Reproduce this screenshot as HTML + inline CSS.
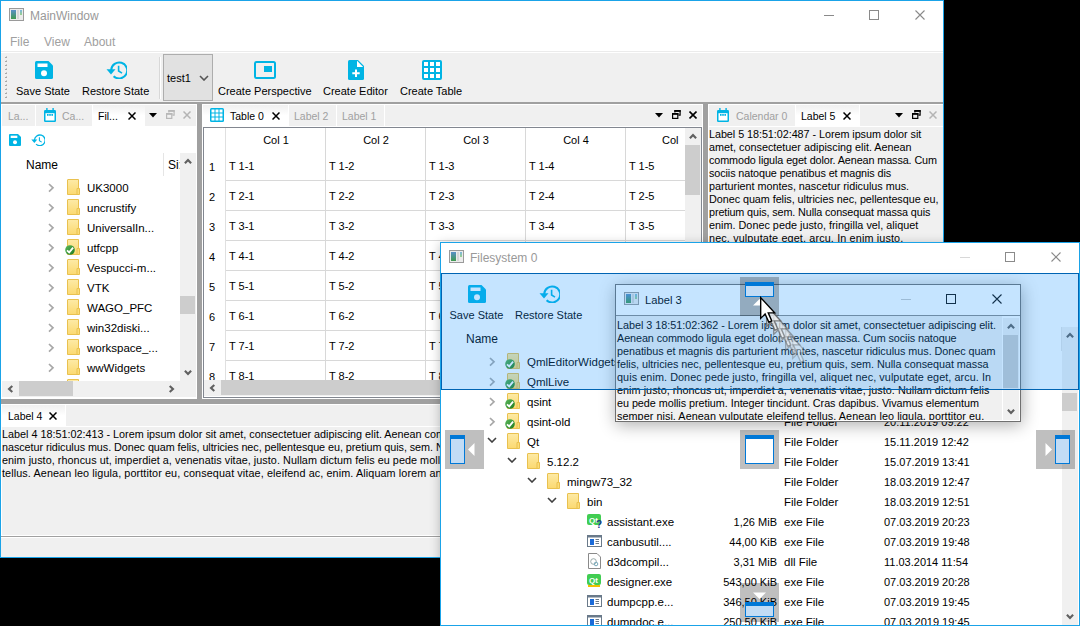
<!DOCTYPE html><html><head><meta charset="utf-8"><style>
html,body{margin:0;padding:0;}
body{width:1080px;height:626px;background:#000;position:relative;overflow:hidden;font-family:"Liberation Sans", sans-serif;}
.t{position:absolute;white-space:nowrap;line-height:1;font-family:"Liberation Sans", sans-serif;}
.r{position:absolute;display:block;}
.clip{position:absolute;overflow:hidden;}
</style></head><body>
<div class="r" style="left:0px;top:0px;width:944px;height:558px;background:#1aa3e8;"></div>
<div class="r" style="left:1px;top:1px;width:942px;height:556px;background:#f0f0f0;"></div>
<div class="r" style="left:1px;top:1px;width:942px;height:51px;background:#ffffff;"></div>
<svg class="r" style="left:9px;top:8px;" width="15" height="13" viewBox="0 0 15 13"><defs><linearGradient id="wg" x1="0" y1="0" x2="0" y2="1"><stop offset="0" stop-color="#5a8fc8"/><stop offset="1" stop-color="#3f9a4f"/></linearGradient><linearGradient id="wg2" x1="0" y1="0" x2="0" y2="1"><stop offset="0" stop-color="#7ab6e0"/><stop offset="1" stop-color="#9ad08a"/></linearGradient></defs><rect x="0.5" y="0.5" width="14" height="12" fill="#ececec" stroke="#9a9a9a"/><rect x="2" y="2" width="5" height="9" fill="url(#wg)"/><rect x="8" y="2" width="2" height="9" fill="#d6d6d6"/><rect x="11" y="2" width="2" height="5" fill="url(#wg2)"/></svg>
<div class="t" style="left:30px;top:9.84px;font-size:12px;color:#999;">MainWindow</div>
<div class="r" style="left:824px;top:15px;width:10px;height:1px;background:#8a8a8a;"></div>
<div class="r" style="left:869px;top:10px;width:10px;height:10px;background:transparent;border:1px solid #8a8a8a;box-sizing:border-box;"></div>
<svg class="r" style="left:915px;top:10px;" width="10" height="10" viewBox="0 0 10 10"><path d="M0.5 0.5 L9.5 9.5 M9.5 0.5 L0.5 9.5" stroke="#8a8a8a" stroke-width="1.1"/></svg>
<div class="t" style="left:10px;top:35.84px;font-size:12px;color:#a0a0a0;">File</div>
<div class="t" style="left:44px;top:35.84px;font-size:12px;color:#a0a0a0;">View</div>
<div class="t" style="left:84px;top:35.84px;font-size:12px;color:#a0a0a0;">About</div>
<div class="r" style="left:1px;top:51px;width:942px;height:1px;background:#ebebeb;"></div>
<div class="r" style="left:1px;top:52px;width:942px;height:1px;background:#ffffff;"></div>
<div class="r" style="left:1px;top:53px;width:942px;height:49px;background:#f0f0f0;"></div>
<div class="r" style="left:5px;top:57px;width:2px;height:1px;background:#a8a8a8;"></div>
<div class="r" style="left:6px;top:56px;width:1px;height:1px;background:#c8c8c8;"></div>
<div class="r" style="left:5px;top:61px;width:2px;height:1px;background:#a8a8a8;"></div>
<div class="r" style="left:6px;top:60px;width:1px;height:1px;background:#c8c8c8;"></div>
<div class="r" style="left:5px;top:65px;width:2px;height:1px;background:#a8a8a8;"></div>
<div class="r" style="left:6px;top:64px;width:1px;height:1px;background:#c8c8c8;"></div>
<div class="r" style="left:5px;top:69px;width:2px;height:1px;background:#a8a8a8;"></div>
<div class="r" style="left:6px;top:68px;width:1px;height:1px;background:#c8c8c8;"></div>
<div class="r" style="left:5px;top:73px;width:2px;height:1px;background:#a8a8a8;"></div>
<div class="r" style="left:6px;top:72px;width:1px;height:1px;background:#c8c8c8;"></div>
<div class="r" style="left:5px;top:77px;width:2px;height:1px;background:#a8a8a8;"></div>
<div class="r" style="left:6px;top:76px;width:1px;height:1px;background:#c8c8c8;"></div>
<div class="r" style="left:5px;top:81px;width:2px;height:1px;background:#a8a8a8;"></div>
<div class="r" style="left:6px;top:80px;width:1px;height:1px;background:#c8c8c8;"></div>
<div class="r" style="left:5px;top:85px;width:2px;height:1px;background:#a8a8a8;"></div>
<div class="r" style="left:6px;top:84px;width:1px;height:1px;background:#c8c8c8;"></div>
<div class="r" style="left:5px;top:89px;width:2px;height:1px;background:#a8a8a8;"></div>
<div class="r" style="left:6px;top:88px;width:1px;height:1px;background:#c8c8c8;"></div>
<div class="r" style="left:5px;top:93px;width:2px;height:1px;background:#a8a8a8;"></div>
<div class="r" style="left:6px;top:92px;width:1px;height:1px;background:#c8c8c8;"></div>
<div class="r" style="left:5px;top:97px;width:2px;height:1px;background:#a8a8a8;"></div>
<div class="r" style="left:6px;top:96px;width:1px;height:1px;background:#c8c8c8;"></div>
<svg class="r" style="left:35px;top:61px;" width="18" height="18" viewBox="0 0 18 18"><g transform="scale(1.0)"><path d="M1.5 0 H13.5 L18 4.5 V16.5 Q18 18 16.5 18 H1.5 Q0 18 0 16.5 V1.5 Q0 0 1.5 0Z" fill="#00b4e4"/><rect x="2.5" y="2.5" width="10" height="3.5" fill="#fff"/><circle cx="9" cy="12.3" r="3" fill="#fff"/></g></svg>
<div class="t" style="left:16px;top:85.69px;font-size:11px;color:#000;">Save State</div>
<svg class="r" style="left:106px;top:61px;" width="21" height="18" viewBox="0 0 21 18"><g transform="scale(1.0,1.0)"><path d="M5.2 9 A8 8 0 1 1 7.6 15.2" fill="none" stroke="#00b4e4" stroke-width="2"/><path d="M0.5 8.2 L9.5 8.2 L5 13.5Z" fill="#00b4e4"/><path d="M12.6 4.8 V10 L16 12.2" fill="none" stroke="#00b4e4" stroke-width="1.6"/></g></svg>
<div class="t" style="left:82px;top:85.69px;font-size:11px;color:#000;">Restore State</div>
<div class="r" style="left:159px;top:57px;width:1px;height:42px;background:#d8d8d8;"></div>
<div class="r" style="left:160px;top:57px;width:1px;height:42px;background:#ffffff;"></div>
<div class="r" style="left:163px;top:54px;width:50px;height:47px;background:#e1e1e1;border:1px solid #adadad;box-sizing:border-box;"></div>
<div class="t" style="left:167px;top:72.69px;font-size:11px;color:#000;">test1</div>
<svg class="r" style="left:199px;top:75px;" width="10" height="6" viewBox="0 0 10 6"><path d="M1 1 L5 5 L9 1" fill="none" stroke="#555" stroke-width="1.6"/></svg>
<svg class="r" style="left:254px;top:61px;" width="22" height="18" viewBox="0 0 22 18"><rect x="1" y="1" width="20" height="16" rx="1.5" fill="none" stroke="#00b4e4" stroke-width="2"/><rect x="10" y="5" width="8" height="6" fill="#00b4e4"/></svg>
<div class="t" style="left:218px;top:85.69px;font-size:11px;color:#000;">Create Perspective</div>
<svg class="r" style="left:348px;top:60px;" width="16" height="20" viewBox="0 0 16 20"><path d="M1.5 0 H10 L16 6 V18.5 Q16 20 14.5 20 H1.5 Q0 20 0 18.5 V1.5 Q0 0 1.5 0Z" fill="#00b4e4"/><path d="M9 0.8 V7 H15.2Z" fill="#fff"/><path d="M8 9.5 V17 M4.3 13.3 H11.7" stroke="#fff" stroke-width="2"/></svg>
<div class="t" style="left:323px;top:85.69px;font-size:11px;color:#000;">Create Editor</div>
<svg class="r" style="left:422px;top:60px;" width="20" height="20" viewBox="0 0 20 20"><rect x="0" y="0" width="20" height="20" rx="2" fill="#00b4e4"/><rect x="2" y="2" width="4" height="4" fill="#fff"/><rect x="2" y="8" width="4" height="4" fill="#fff"/><rect x="2" y="14" width="4" height="4" fill="#fff"/><rect x="8" y="2" width="4" height="4" fill="#fff"/><rect x="8" y="8" width="4" height="4" fill="#fff"/><rect x="8" y="14" width="4" height="4" fill="#fff"/><rect x="14" y="2" width="4" height="4" fill="#fff"/><rect x="14" y="8" width="4" height="4" fill="#fff"/><rect x="14" y="14" width="4" height="4" fill="#fff"/></svg>
<div class="t" style="left:400px;top:85.69px;font-size:11px;color:#000;">Create Table</div>
<div class="r" style="left:1px;top:102px;width:942px;height:2px;background:#a0a0a0;"></div>
<div class="r" style="left:1px;top:104px;width:196px;height:295px;background:#ffffff;"></div>
<div class="r" style="left:2px;top:105px;width:194px;height:21px;background:#f0f0f0;"></div>
<div class="r" style="left:35px;top:105px;width:1px;height:21px;background:#ffffff;"></div>
<div class="r" style="left:92px;top:105px;width:1px;height:21px;background:#ffffff;"></div>
<div class="t" style="left:8px;top:111.11px;font-size:10.5px;color:#a0a0a0;">La...</div>
<svg class="r" style="left:44px;top:108px;" width="12" height="14" viewBox="0 0 12 14"><rect x="0" y="2" width="12" height="12" rx="1.2" fill="#00b4e4"/><rect x="1.5" y="5.2" width="9" height="7.3" fill="#fff"/><rect x="2.2" y="0" width="1.4" height="3" fill="#00b4e4"/><rect x="8.4" y="0" width="1.4" height="3" fill="#00b4e4"/><rect x="3" y="6" width="1.6" height="1.8" fill="#00b4e4"/><rect x="5.2" y="6" width="1.6" height="1.8" fill="#00b4e4"/><rect x="7.4" y="6" width="1.6" height="1.8" fill="#00b4e4"/></svg>
<div class="t" style="left:62px;top:111.11px;font-size:10.5px;color:#a0a0a0;">Ca...</div>
<div class="r" style="left:93px;top:105px;width:52px;height:21px;background:linear-gradient(#f0f0f0 0%, #ffffff 50%, #ffffff 100%);"></div>
<div class="t" style="left:98px;top:111.11px;font-size:10.5px;color:#000;">Fil...</div>
<svg class="r" style="left:128px;top:112px;" width="8" height="8" viewBox="0 0 8 8"><path d="M0.5 0.5 L7.5 7.5 M7.5 0.5 L0.5 7.5" stroke="#000" stroke-width="1.5"/></svg>
<svg class="r" style="left:149px;top:113px;" width="8" height="5" viewBox="0 0 8 5"><path d="M0 0 H8 L4 4.6Z" fill="#000"/></svg>
<svg class="r" style="left:166px;top:110px;" width="9" height="9" viewBox="0 0 9 9"><path d="M2.9 2.5 V0.9 H8.1 V5.1 H6.4" fill="none" stroke="#b8b8b8" stroke-width="1.2"/><rect x="2.3" y="0" width="6.4" height="1.8" fill="#b8b8b8"/><rect x="0.6" y="3.6" width="5.2" height="4.8" fill="none" stroke="#b8b8b8" stroke-width="1.2"/><rect x="0" y="3" width="6.4" height="1.8" fill="#b8b8b8"/></svg>
<svg class="r" style="left:183px;top:111px;" width="8" height="8" viewBox="0 0 8 8"><path d="M0.5 0.5 L7.5 7.5 M7.5 0.5 L0.5 7.5" stroke="#b4b4b4" stroke-width="1.5"/></svg>
<div class="r" style="left:2px;top:126px;width:194px;height:272px;background:#ffffff;"></div>
<svg class="r" style="left:9px;top:134px;" width="12" height="12" viewBox="0 0 12 12"><g transform="scale(0.6666666666666666)"><path d="M1.5 0 H13.5 L18 4.5 V16.5 Q18 18 16.5 18 H1.5 Q0 18 0 16.5 V1.5 Q0 0 1.5 0Z" fill="#00b4e4"/><rect x="2.5" y="2.5" width="10" height="3.5" fill="#fff"/><circle cx="9" cy="12.3" r="3" fill="#fff"/></g></svg>
<svg class="r" style="left:31px;top:134px;" width="14" height="12" viewBox="0 0 14 12"><g transform="scale(0.6666666666666666,0.6666666666666666)"><path d="M5.2 9 A8 8 0 1 1 7.6 15.2" fill="none" stroke="#00b4e4" stroke-width="2"/><path d="M0.5 8.2 L9.5 8.2 L5 13.5Z" fill="#00b4e4"/><path d="M12.6 4.8 V10 L16 12.2" fill="none" stroke="#00b4e4" stroke-width="1.6"/></g></svg>
<div class="t" style="left:26px;top:158.54px;font-size:12px;color:#000;">Name</div>
<div class="r" style="left:163px;top:153px;width:1px;height:23px;background:#e5e5e5;"></div>
<div class="t" style="left:168px;top:158.54px;font-size:12px;color:#000;">Si:</div>
<div class="r" style="left:180px;top:153px;width:16px;height:228px;background:#f0f0f0;"></div>
<svg class="r" style="left:184px;top:158px;" width="8" height="7" viewBox="0 0 8 7"><path d="M0.9 5.3 L4 2 L7.1 5.3" fill="none" stroke="#606060" stroke-width="2.1"/></svg>
<svg class="r" style="left:184px;top:369px;" width="8" height="7" viewBox="0 0 8 7"><path d="M0.9 1.7 L4 5 L7.1 1.7" fill="none" stroke="#606060" stroke-width="2.1"/></svg>
<div class="r" style="left:180px;top:296px;width:15px;height:18px;background:#cdcdcd;"></div>
<svg class="r" style="left:48px;top:183px;" width="7" height="10" viewBox="0 0 7 10"><path d="M1 1 L5 4.8 L1 8.6" fill="none" stroke="#a8a8a8" stroke-width="1.7"/></svg>
<svg class="r" style="left:67px;top:179px;" width="14" height="16" viewBox="0 0 14 16"><defs><linearGradient id="fg" x1="0" y1="0" x2="0" y2="1"><stop offset="0" stop-color="#fdeaa6"/><stop offset="1" stop-color="#fbd970"/></linearGradient></defs><path d="M0.5 1 Q0.5 0.5 1 0.5 H11.5 V15.5 H0.5Z" fill="url(#fg)" stroke="#e9c14f"/><path d="M10 9.5 H12.5 V15.5 H10Z" fill="#fbdc78" stroke="#e9c14f"/></svg>
<div class="t" style="left:87px;top:182.86px;font-size:11.5px;color:#000;">UK3000</div>
<svg class="r" style="left:48px;top:203px;" width="7" height="10" viewBox="0 0 7 10"><path d="M1 1 L5 4.8 L1 8.6" fill="none" stroke="#a8a8a8" stroke-width="1.7"/></svg>
<svg class="r" style="left:67px;top:199px;" width="14" height="16" viewBox="0 0 14 16"><defs><linearGradient id="fg" x1="0" y1="0" x2="0" y2="1"><stop offset="0" stop-color="#fdeaa6"/><stop offset="1" stop-color="#fbd970"/></linearGradient></defs><path d="M0.5 1 Q0.5 0.5 1 0.5 H11.5 V15.5 H0.5Z" fill="url(#fg)" stroke="#e9c14f"/><path d="M10 9.5 H12.5 V15.5 H10Z" fill="#fbdc78" stroke="#e9c14f"/></svg>
<div class="t" style="left:87px;top:202.86px;font-size:11.5px;color:#000;">uncrustify</div>
<svg class="r" style="left:48px;top:223px;" width="7" height="10" viewBox="0 0 7 10"><path d="M1 1 L5 4.8 L1 8.6" fill="none" stroke="#a8a8a8" stroke-width="1.7"/></svg>
<svg class="r" style="left:67px;top:219px;" width="14" height="16" viewBox="0 0 14 16"><defs><linearGradient id="fg" x1="0" y1="0" x2="0" y2="1"><stop offset="0" stop-color="#fdeaa6"/><stop offset="1" stop-color="#fbd970"/></linearGradient></defs><path d="M0.5 1 Q0.5 0.5 1 0.5 H11.5 V15.5 H0.5Z" fill="url(#fg)" stroke="#e9c14f"/><path d="M10 9.5 H12.5 V15.5 H10Z" fill="#fbdc78" stroke="#e9c14f"/></svg>
<div class="t" style="left:87px;top:222.86px;font-size:11.5px;color:#000;">UniversalIn...</div>
<svg class="r" style="left:48px;top:243px;" width="7" height="10" viewBox="0 0 7 10"><path d="M1 1 L5 4.8 L1 8.6" fill="none" stroke="#a8a8a8" stroke-width="1.7"/></svg>
<svg class="r" style="left:67px;top:239px;" width="14" height="16" viewBox="0 0 14 16"><defs><linearGradient id="fg" x1="0" y1="0" x2="0" y2="1"><stop offset="0" stop-color="#fdeaa6"/><stop offset="1" stop-color="#fbd970"/></linearGradient></defs><path d="M0.5 1 Q0.5 0.5 1 0.5 H11.5 V15.5 H0.5Z" fill="url(#fg)" stroke="#e9c14f"/><path d="M10 9.5 H12.5 V15.5 H10Z" fill="#fbdc78" stroke="#e9c14f"/></svg>
<svg class="r" style="left:65px;top:245px;" width="10" height="10" viewBox="0 0 10 10"><defs><linearGradient id="cg" x1="0" y1="0" x2="1" y2="1"><stop offset="0" stop-color="#5cb85c"/><stop offset="1" stop-color="#1e7a1e"/></linearGradient></defs><circle cx="5" cy="5" r="4.8" fill="url(#cg)"/><path d="M2 5.3 L4.2 7.4 L8.1 2.6" fill="none" stroke="#fff" stroke-width="1.8"/></svg>
<div class="t" style="left:87px;top:242.86px;font-size:11.5px;color:#000;">utfcpp</div>
<svg class="r" style="left:48px;top:263px;" width="7" height="10" viewBox="0 0 7 10"><path d="M1 1 L5 4.8 L1 8.6" fill="none" stroke="#a8a8a8" stroke-width="1.7"/></svg>
<svg class="r" style="left:67px;top:259px;" width="14" height="16" viewBox="0 0 14 16"><defs><linearGradient id="fg" x1="0" y1="0" x2="0" y2="1"><stop offset="0" stop-color="#fdeaa6"/><stop offset="1" stop-color="#fbd970"/></linearGradient></defs><path d="M0.5 1 Q0.5 0.5 1 0.5 H11.5 V15.5 H0.5Z" fill="url(#fg)" stroke="#e9c14f"/><path d="M10 9.5 H12.5 V15.5 H10Z" fill="#fbdc78" stroke="#e9c14f"/></svg>
<div class="t" style="left:87px;top:262.86px;font-size:11.5px;color:#000;">Vespucci-m...</div>
<svg class="r" style="left:48px;top:283px;" width="7" height="10" viewBox="0 0 7 10"><path d="M1 1 L5 4.8 L1 8.6" fill="none" stroke="#a8a8a8" stroke-width="1.7"/></svg>
<svg class="r" style="left:67px;top:279px;" width="14" height="16" viewBox="0 0 14 16"><defs><linearGradient id="fg" x1="0" y1="0" x2="0" y2="1"><stop offset="0" stop-color="#fdeaa6"/><stop offset="1" stop-color="#fbd970"/></linearGradient></defs><path d="M0.5 1 Q0.5 0.5 1 0.5 H11.5 V15.5 H0.5Z" fill="url(#fg)" stroke="#e9c14f"/><path d="M10 9.5 H12.5 V15.5 H10Z" fill="#fbdc78" stroke="#e9c14f"/></svg>
<div class="t" style="left:87px;top:282.86px;font-size:11.5px;color:#000;">VTK</div>
<svg class="r" style="left:48px;top:303px;" width="7" height="10" viewBox="0 0 7 10"><path d="M1 1 L5 4.8 L1 8.6" fill="none" stroke="#a8a8a8" stroke-width="1.7"/></svg>
<svg class="r" style="left:67px;top:299px;" width="14" height="16" viewBox="0 0 14 16"><defs><linearGradient id="fg" x1="0" y1="0" x2="0" y2="1"><stop offset="0" stop-color="#fdeaa6"/><stop offset="1" stop-color="#fbd970"/></linearGradient></defs><path d="M0.5 1 Q0.5 0.5 1 0.5 H11.5 V15.5 H0.5Z" fill="url(#fg)" stroke="#e9c14f"/><path d="M10 9.5 H12.5 V15.5 H10Z" fill="#fbdc78" stroke="#e9c14f"/></svg>
<div class="t" style="left:87px;top:302.86px;font-size:11.5px;color:#000;">WAGO_PFC</div>
<svg class="r" style="left:48px;top:323px;" width="7" height="10" viewBox="0 0 7 10"><path d="M1 1 L5 4.8 L1 8.6" fill="none" stroke="#a8a8a8" stroke-width="1.7"/></svg>
<svg class="r" style="left:67px;top:319px;" width="14" height="16" viewBox="0 0 14 16"><defs><linearGradient id="fg" x1="0" y1="0" x2="0" y2="1"><stop offset="0" stop-color="#fdeaa6"/><stop offset="1" stop-color="#fbd970"/></linearGradient></defs><path d="M0.5 1 Q0.5 0.5 1 0.5 H11.5 V15.5 H0.5Z" fill="url(#fg)" stroke="#e9c14f"/><path d="M10 9.5 H12.5 V15.5 H10Z" fill="#fbdc78" stroke="#e9c14f"/></svg>
<div class="t" style="left:87px;top:322.86px;font-size:11.5px;color:#000;">win32diski...</div>
<svg class="r" style="left:48px;top:343px;" width="7" height="10" viewBox="0 0 7 10"><path d="M1 1 L5 4.8 L1 8.6" fill="none" stroke="#a8a8a8" stroke-width="1.7"/></svg>
<svg class="r" style="left:67px;top:339px;" width="14" height="16" viewBox="0 0 14 16"><defs><linearGradient id="fg" x1="0" y1="0" x2="0" y2="1"><stop offset="0" stop-color="#fdeaa6"/><stop offset="1" stop-color="#fbd970"/></linearGradient></defs><path d="M0.5 1 Q0.5 0.5 1 0.5 H11.5 V15.5 H0.5Z" fill="url(#fg)" stroke="#e9c14f"/><path d="M10 9.5 H12.5 V15.5 H10Z" fill="#fbdc78" stroke="#e9c14f"/></svg>
<div class="t" style="left:87px;top:342.86px;font-size:11.5px;color:#000;">workspace_...</div>
<svg class="r" style="left:48px;top:363px;" width="7" height="10" viewBox="0 0 7 10"><path d="M1 1 L5 4.8 L1 8.6" fill="none" stroke="#a8a8a8" stroke-width="1.7"/></svg>
<svg class="r" style="left:67px;top:359px;" width="14" height="16" viewBox="0 0 14 16"><defs><linearGradient id="fg" x1="0" y1="0" x2="0" y2="1"><stop offset="0" stop-color="#fdeaa6"/><stop offset="1" stop-color="#fbd970"/></linearGradient></defs><path d="M0.5 1 Q0.5 0.5 1 0.5 H11.5 V15.5 H0.5Z" fill="url(#fg)" stroke="#e9c14f"/><path d="M10 9.5 H12.5 V15.5 H10Z" fill="#fbdc78" stroke="#e9c14f"/></svg>
<div class="t" style="left:87px;top:362.86px;font-size:11.5px;color:#000;">wwWidgets</div>
<svg class="r" style="left:67px;top:379px;" width="14" height="16" viewBox="0 0 14 16"><defs><linearGradient id="fg" x1="0" y1="0" x2="0" y2="1"><stop offset="0" stop-color="#fdeaa6"/><stop offset="1" stop-color="#fbd970"/></linearGradient></defs><path d="M0.5 1 Q0.5 0.5 1 0.5 H11.5 V15.5 H0.5Z" fill="url(#fg)" stroke="#e9c14f"/><path d="M10 9.5 H12.5 V15.5 H10Z" fill="#fbdc78" stroke="#e9c14f"/></svg>
<div class="r" style="left:2px;top:381px;width:178px;height:16px;background:#f0f0f0;"></div>
<svg class="r" style="left:7px;top:385px;" width="7" height="8" viewBox="0 0 7 8"><path d="M5.3 0.9 L2 4 L5.3 7.1" fill="none" stroke="#606060" stroke-width="2.1"/></svg>
<svg class="r" style="left:168px;top:385px;" width="7" height="8" viewBox="0 0 7 8"><path d="M1.7 0.9 L5 4 L1.7 7.1" fill="none" stroke="#606060" stroke-width="2.1"/></svg>
<div class="r" style="left:19px;top:381px;width:54px;height:15px;background:#cdcdcd;"></div>
<div class="r" style="left:180px;top:381px;width:16px;height:16px;background:#f0f0f0;"></div>
<div class="r" style="left:197px;top:104px;width:5px;height:295px;background:#a0a0a0;"></div>
<div class="r" style="left:703px;top:104px;width:5px;height:295px;background:#a0a0a0;"></div>
<div class="r" style="left:1px;top:399px;width:942px;height:5px;background:#a0a0a0;"></div>
<div class="r" style="left:202px;top:104px;width:501px;height:295px;background:#ffffff;"></div>
<div class="r" style="left:203px;top:105px;width:499px;height:21px;background:#f0f0f0;"></div>
<div class="r" style="left:203px;top:105px;width:85px;height:21px;background:linear-gradient(#f0f0f0 0%, #ffffff 50%, #ffffff 100%);"></div>
<svg class="r" style="left:210px;top:108px;" width="14" height="14" viewBox="0 0 14 14"><rect x="0" y="0" width="14" height="14" rx="1.5" fill="#00b4e4"/><rect x="1.5" y="1.5" width="3" height="3" fill="#fff"/><rect x="1.5" y="5.5" width="3" height="3" fill="#fff"/><rect x="1.5" y="9.5" width="3" height="3" fill="#fff"/><rect x="5.5" y="1.5" width="3" height="3" fill="#fff"/><rect x="5.5" y="5.5" width="3" height="3" fill="#fff"/><rect x="5.5" y="9.5" width="3" height="3" fill="#fff"/><rect x="9.5" y="1.5" width="3" height="3" fill="#fff"/><rect x="9.5" y="5.5" width="3" height="3" fill="#fff"/><rect x="9.5" y="9.5" width="3" height="3" fill="#fff"/></svg>
<div class="t" style="left:230px;top:111.11px;font-size:10.5px;color:#000;">Table 0</div>
<svg class="r" style="left:272px;top:112px;" width="8" height="8" viewBox="0 0 8 8"><path d="M0.5 0.5 L7.5 7.5 M7.5 0.5 L0.5 7.5" stroke="#000" stroke-width="1.5"/></svg>
<div class="r" style="left:288px;top:105px;width:1px;height:21px;background:#ffffff;"></div>
<div class="t" style="left:294px;top:111.11px;font-size:10.5px;color:#a0a0a0;">Label 2</div>
<div class="r" style="left:336px;top:105px;width:1px;height:21px;background:#ffffff;"></div>
<div class="t" style="left:342px;top:111.11px;font-size:10.5px;color:#a0a0a0;">Label 1</div>
<div class="r" style="left:384px;top:105px;width:1px;height:21px;background:#ffffff;"></div>
<svg class="r" style="left:655px;top:113px;" width="8" height="5" viewBox="0 0 8 5"><path d="M0 0 H8 L4 4.6Z" fill="#000"/></svg>
<svg class="r" style="left:672px;top:110px;" width="9" height="9" viewBox="0 0 9 9"><path d="M2.9 2.5 V0.9 H8.1 V5.1 H6.4" fill="none" stroke="#000" stroke-width="1.2"/><rect x="2.3" y="0" width="6.4" height="1.8" fill="#000"/><rect x="0.6" y="3.6" width="5.2" height="4.8" fill="none" stroke="#000" stroke-width="1.2"/><rect x="0" y="3" width="6.4" height="1.8" fill="#000"/></svg>
<svg class="r" style="left:689px;top:111px;" width="8" height="8" viewBox="0 0 8 8"><path d="M0.5 0.5 L7.5 7.5 M7.5 0.5 L0.5 7.5" stroke="#000" stroke-width="1.6"/></svg>
<div class="r" style="left:203px;top:127px;width:499px;height:271px;background:#ffffff;border:1px solid #828790;box-sizing:border-box;"></div>
<div class="r" style="left:225px;top:128px;width:1px;height:253px;background:#e0e0e0;"></div>
<div class="r" style="left:325px;top:128px;width:1px;height:253px;background:#d8d8d8;"></div>
<div class="r" style="left:425px;top:128px;width:1px;height:253px;background:#d8d8d8;"></div>
<div class="r" style="left:525px;top:128px;width:1px;height:253px;background:#d8d8d8;"></div>
<div class="r" style="left:625px;top:128px;width:1px;height:253px;background:#d8d8d8;"></div>
<div class="r" style="left:226px;top:180px;width:459px;height:1px;background:#d8d8d8;"></div>
<div class="r" style="left:226px;top:210px;width:459px;height:1px;background:#d8d8d8;"></div>
<div class="r" style="left:226px;top:240px;width:459px;height:1px;background:#d8d8d8;"></div>
<div class="r" style="left:226px;top:270px;width:459px;height:1px;background:#d8d8d8;"></div>
<div class="r" style="left:226px;top:300px;width:459px;height:1px;background:#d8d8d8;"></div>
<div class="r" style="left:226px;top:330px;width:459px;height:1px;background:#d8d8d8;"></div>
<div class="r" style="left:226px;top:360px;width:459px;height:1px;background:#d8d8d8;"></div>
<div class="t" style="left:226px;width:100px;text-align:center;top:134.70px;font-size:11px;">Col 1</div>
<div class="t" style="left:326px;width:100px;text-align:center;top:134.70px;font-size:11px;">Col 2</div>
<div class="t" style="left:426px;width:100px;text-align:center;top:134.70px;font-size:11px;">Col 3</div>
<div class="t" style="left:526px;width:100px;text-align:center;top:134.70px;font-size:11px;">Col 4</div>
<div class="t" style="left:662px;top:134.69px;font-size:11px;color:#000;">Col</div>
<div class="t" style="left:209px;top:161.69px;font-size:11px;color:#000;">1</div>
<div class="t" style="left:229px;top:160.69px;font-size:11px;color:#000;">T 1-1</div>
<div class="t" style="left:329px;top:160.69px;font-size:11px;color:#000;">T 1-2</div>
<div class="t" style="left:429px;top:160.69px;font-size:11px;color:#000;">T 1-3</div>
<div class="t" style="left:529px;top:160.69px;font-size:11px;color:#000;">T 1-4</div>
<div class="t" style="left:629px;top:160.69px;font-size:11px;color:#000;">T 1-5</div>
<div class="t" style="left:209px;top:191.69px;font-size:11px;color:#000;">2</div>
<div class="t" style="left:229px;top:190.69px;font-size:11px;color:#000;">T 2-1</div>
<div class="t" style="left:329px;top:190.69px;font-size:11px;color:#000;">T 2-2</div>
<div class="t" style="left:429px;top:190.69px;font-size:11px;color:#000;">T 2-3</div>
<div class="t" style="left:529px;top:190.69px;font-size:11px;color:#000;">T 2-4</div>
<div class="t" style="left:629px;top:190.69px;font-size:11px;color:#000;">T 2-5</div>
<div class="t" style="left:209px;top:221.69px;font-size:11px;color:#000;">3</div>
<div class="t" style="left:229px;top:220.69px;font-size:11px;color:#000;">T 3-1</div>
<div class="t" style="left:329px;top:220.69px;font-size:11px;color:#000;">T 3-2</div>
<div class="t" style="left:429px;top:220.69px;font-size:11px;color:#000;">T 3-3</div>
<div class="t" style="left:529px;top:220.69px;font-size:11px;color:#000;">T 3-4</div>
<div class="t" style="left:629px;top:220.69px;font-size:11px;color:#000;">T 3-5</div>
<div class="t" style="left:209px;top:251.69px;font-size:11px;color:#000;">4</div>
<div class="t" style="left:229px;top:250.69px;font-size:11px;color:#000;">T 4-1</div>
<div class="t" style="left:329px;top:250.69px;font-size:11px;color:#000;">T 4-2</div>
<div class="t" style="left:429px;top:250.69px;font-size:11px;color:#000;">T 4-3</div>
<div class="t" style="left:529px;top:250.69px;font-size:11px;color:#000;">T 4-4</div>
<div class="t" style="left:629px;top:250.69px;font-size:11px;color:#000;">T 4-5</div>
<div class="t" style="left:209px;top:281.69px;font-size:11px;color:#000;">5</div>
<div class="t" style="left:229px;top:280.69px;font-size:11px;color:#000;">T 5-1</div>
<div class="t" style="left:329px;top:280.69px;font-size:11px;color:#000;">T 5-2</div>
<div class="t" style="left:429px;top:280.69px;font-size:11px;color:#000;">T 5-3</div>
<div class="t" style="left:529px;top:280.69px;font-size:11px;color:#000;">T 5-4</div>
<div class="t" style="left:629px;top:280.69px;font-size:11px;color:#000;">T 5-5</div>
<div class="t" style="left:209px;top:311.69px;font-size:11px;color:#000;">6</div>
<div class="t" style="left:229px;top:310.69px;font-size:11px;color:#000;">T 6-1</div>
<div class="t" style="left:329px;top:310.69px;font-size:11px;color:#000;">T 6-2</div>
<div class="t" style="left:429px;top:310.69px;font-size:11px;color:#000;">T 6-3</div>
<div class="t" style="left:529px;top:310.69px;font-size:11px;color:#000;">T 6-4</div>
<div class="t" style="left:629px;top:310.69px;font-size:11px;color:#000;">T 6-5</div>
<div class="t" style="left:209px;top:341.69px;font-size:11px;color:#000;">7</div>
<div class="t" style="left:229px;top:340.69px;font-size:11px;color:#000;">T 7-1</div>
<div class="t" style="left:329px;top:340.69px;font-size:11px;color:#000;">T 7-2</div>
<div class="t" style="left:429px;top:340.69px;font-size:11px;color:#000;">T 7-3</div>
<div class="t" style="left:529px;top:340.69px;font-size:11px;color:#000;">T 7-4</div>
<div class="t" style="left:629px;top:340.69px;font-size:11px;color:#000;">T 7-5</div>
<div class="t" style="left:209px;top:371.69px;font-size:11px;color:#000;">8</div>
<div class="t" style="left:229px;top:370.69px;font-size:11px;color:#000;">T 8-1</div>
<div class="t" style="left:329px;top:370.69px;font-size:11px;color:#000;">T 8-2</div>
<div class="t" style="left:429px;top:370.69px;font-size:11px;color:#000;">T 8-3</div>
<div class="t" style="left:529px;top:370.69px;font-size:11px;color:#000;">T 8-4</div>
<div class="t" style="left:629px;top:370.69px;font-size:11px;color:#000;">T 8-5</div>
<div class="r" style="left:685px;top:128px;width:16px;height:252px;background:#f0f0f0;"></div>
<svg class="r" style="left:689px;top:133px;" width="8" height="7" viewBox="0 0 8 7"><path d="M0.9 5.3 L4 2 L7.1 5.3" fill="none" stroke="#606060" stroke-width="2.1"/></svg>
<svg class="r" style="left:689px;top:368px;" width="8" height="7" viewBox="0 0 8 7"><path d="M0.9 1.7 L4 5 L7.1 1.7" fill="none" stroke="#606060" stroke-width="2.1"/></svg>
<div class="r" style="left:685px;top:145px;width:15px;height:50px;background:#cdcdcd;"></div>
<div class="r" style="left:204px;top:380px;width:481px;height:16px;background:#f0f0f0;"></div>
<svg class="r" style="left:209px;top:384px;" width="7" height="8" viewBox="0 0 7 8"><path d="M5.3 0.9 L2 4 L5.3 7.1" fill="none" stroke="#606060" stroke-width="2.1"/></svg>
<svg class="r" style="left:673px;top:384px;" width="7" height="8" viewBox="0 0 7 8"><path d="M1.7 0.9 L5 4 L1.7 7.1" fill="none" stroke="#606060" stroke-width="2.1"/></svg>
<div class="r" style="left:221px;top:380px;width:400px;height:15px;background:#cdcdcd;"></div>
<div class="r" style="left:685px;top:380px;width:16px;height:17px;background:#f0f0f0;"></div>
<div class="r" style="left:708px;top:104px;width:235px;height:295px;background:#ffffff;"></div>
<div class="r" style="left:709px;top:105px;width:234px;height:21px;background:#f0f0f0;"></div>
<svg class="r" style="left:717px;top:108px;" width="12" height="14" viewBox="0 0 12 14"><rect x="0" y="2" width="12" height="12" rx="1.2" fill="#00b4e4"/><rect x="1.5" y="5.2" width="9" height="7.3" fill="#fff"/><rect x="2.2" y="0" width="1.4" height="3" fill="#00b4e4"/><rect x="8.4" y="0" width="1.4" height="3" fill="#00b4e4"/><rect x="3" y="6" width="1.6" height="1.8" fill="#00b4e4"/><rect x="5.2" y="6" width="1.6" height="1.8" fill="#00b4e4"/><rect x="7.4" y="6" width="1.6" height="1.8" fill="#00b4e4"/></svg>
<div class="t" style="left:736px;top:111.11px;font-size:10.5px;color:#a0a0a0;">Calendar 0</div>
<div class="r" style="left:795px;top:105px;width:1px;height:21px;background:#ffffff;"></div>
<div class="r" style="left:796px;top:105px;width:63px;height:21px;background:linear-gradient(#f0f0f0 0%, #ffffff 50%, #ffffff 100%);"></div>
<div class="t" style="left:801px;top:111.11px;font-size:10.5px;color:#000;">Label 5</div>
<div class="r" style="left:859px;top:105px;width:1px;height:21px;background:#ffffff;"></div>
<svg class="r" style="left:843px;top:112px;" width="8" height="8" viewBox="0 0 8 8"><path d="M0.5 0.5 L7.5 7.5 M7.5 0.5 L0.5 7.5" stroke="#000" stroke-width="1.5"/></svg>
<svg class="r" style="left:895px;top:113px;" width="8" height="5" viewBox="0 0 8 5"><path d="M0 0 H8 L4 4.6Z" fill="#000"/></svg>
<svg class="r" style="left:912px;top:110px;" width="9" height="9" viewBox="0 0 9 9"><path d="M2.9 2.5 V0.9 H8.1 V5.1 H6.4" fill="none" stroke="#000" stroke-width="1.2"/><rect x="2.3" y="0" width="6.4" height="1.8" fill="#000"/><rect x="0.6" y="3.6" width="5.2" height="4.8" fill="none" stroke="#000" stroke-width="1.2"/><rect x="0" y="3" width="6.4" height="1.8" fill="#000"/></svg>
<svg class="r" style="left:929px;top:111px;" width="8" height="8" viewBox="0 0 8 8"><path d="M0.5 0.5 L7.5 7.5 M7.5 0.5 L0.5 7.5" stroke="#b4b4b4" stroke-width="1.5"/></svg>
<div class="r" style="left:709px;top:127px;width:234px;height:271px;background:#f0f0f0;"></div>
<div class="t" style="left:709px;top:128.86px;font-size:10.8px;color:#000;letter-spacing:-0.047px;">Label 5 18:51:02:487 - Lorem ipsum dolor sit</div>
<div class="t" style="left:709px;top:141.86px;font-size:10.8px;color:#000;letter-spacing:0.008px;">amet, consectetuer adipiscing elit. Aenean</div>
<div class="t" style="left:709px;top:154.86px;font-size:10.8px;color:#000;letter-spacing:-0.099px;">commodo ligula eget dolor. Aenean massa. Cum</div>
<div class="t" style="left:709px;top:167.86px;font-size:10.8px;color:#000;letter-spacing:-0.089px;">sociis natoque penatibus et magnis dis</div>
<div class="t" style="left:709px;top:180.86px;font-size:10.8px;color:#000;letter-spacing:-0.008px;">parturient montes, nascetur ridiculus mus.</div>
<div class="t" style="left:709px;top:193.86px;font-size:10.8px;color:#000;letter-spacing:-0.046px;">Donec quam felis, ultricies nec, pellentesque eu,</div>
<div class="t" style="left:709px;top:206.86px;font-size:10.8px;color:#000;letter-spacing:-0.112px;">pretium quis, sem. Nulla consequat massa quis</div>
<div class="t" style="left:709px;top:219.86px;font-size:10.8px;color:#000;letter-spacing:0.022px;">enim. Donec pede justo, fringilla vel, aliquet</div>
<div class="t" style="left:709px;top:232.86px;font-size:10.8px;color:#000;letter-spacing:0.145px;">nec, vulputate eget, arcu. In enim justo,</div>
<div class="r" style="left:1px;top:404px;width:942px;height:132px;background:#ffffff;"></div>
<div class="r" style="left:2px;top:405px;width:940px;height:21px;background:#f0f0f0;"></div>
<div class="r" style="left:2px;top:427px;width:940px;height:108px;background:#f0f0f0;"></div>
<div class="r" style="left:2px;top:405px;width:63px;height:21px;background:linear-gradient(#f0f0f0 0%, #ffffff 50%, #ffffff 100%);"></div>
<div class="r" style="left:65px;top:405px;width:1px;height:21px;background:#ffffff;"></div>
<div class="t" style="left:8px;top:411.11px;font-size:10.5px;color:#000;">Label 4</div>
<svg class="r" style="left:49px;top:412px;" width="8" height="8" viewBox="0 0 8 8"><path d="M0.5 0.5 L7.5 7.5 M7.5 0.5 L0.5 7.5" stroke="#000" stroke-width="1.5"/></svg>
<div class="t" style="left:2px;top:428.86px;font-size:10.8px;color:#000;letter-spacing:-0.0px;">Label 4 18:51:02:413 - Lorem ipsum dolor sit amet, consectetuer adipiscing elit. Aenean commodo ligula eget dolor.</div>
<div class="t" style="left:2px;top:441.86px;font-size:10.8px;color:#000;letter-spacing:-0.058px;">nascetur ridiculus mus. Donec quam felis, ultricies nec, pellentesque eu, pretium quis, sem. Nulla consequat massa</div>
<div class="t" style="left:2px;top:454.86px;font-size:10.8px;color:#000;letter-spacing:0.052px;">enim justo, rhoncus ut, imperdiet a, venenatis vitae, justo. Nullam dictum felis eu pede mollis pretium. Integer</div>
<div class="t" style="left:2px;top:467.86px;font-size:10.8px;color:#000;letter-spacing:0.107px;">tellus. Aenean leo ligula, porttitor eu, consequat vitae, eleifend ac, enim. Aliquam lorem ante, dapibus in</div>
<div class="r" style="left:1px;top:536px;width:942px;height:1px;background:#a0a0a0;"></div>
<div class="r" style="left:1px;top:537px;width:942px;height:1px;background:#ffffff;"></div>
<div class="r" style="left:1px;top:538px;width:942px;height:19px;background:#f0f0f0;"></div>
<div class="r" style="left:440px;top:242px;width:640px;height:384px;background:transparent;box-shadow:0 2px 10px rgba(0,0,0,0.25);"></div>
<div class="r" style="left:440px;top:242px;width:640px;height:384px;background:#1aa3e8;"></div>
<div class="r" style="left:441px;top:243px;width:638px;height:382px;background:#ffffff;"></div>
<svg class="r" style="left:449px;top:250px;" width="15" height="13" viewBox="0 0 15 13"><defs><linearGradient id="wg" x1="0" y1="0" x2="0" y2="1"><stop offset="0" stop-color="#5a8fc8"/><stop offset="1" stop-color="#3f9a4f"/></linearGradient><linearGradient id="wg2" x1="0" y1="0" x2="0" y2="1"><stop offset="0" stop-color="#7ab6e0"/><stop offset="1" stop-color="#9ad08a"/></linearGradient></defs><rect x="0.5" y="0.5" width="14" height="12" fill="#ececec" stroke="#9a9a9a"/><rect x="2" y="2" width="5" height="9" fill="url(#wg)"/><rect x="8" y="2" width="2" height="9" fill="#d6d6d6"/><rect x="11" y="2" width="2" height="5" fill="url(#wg2)"/></svg>
<div class="t" style="left:470px;top:251.84px;font-size:12px;color:#999;">Filesystem 0</div>
<div class="r" style="left:960px;top:257px;width:10px;height:1px;background:#d8d8d8;"></div>
<div class="r" style="left:1005px;top:252px;width:10px;height:10px;background:transparent;border:1px solid #8a8a8a;box-sizing:border-box;"></div>
<svg class="r" style="left:1051px;top:252px;" width="10" height="10" viewBox="0 0 10 10"><path d="M0.5 0.5 L9.5 9.5 M9.5 0.5 L0.5 9.5" stroke="#8a8a8a" stroke-width="1.1"/></svg>
<svg class="r" style="left:468px;top:285px;" width="18" height="18" viewBox="0 0 18 18"><g transform="scale(1.0)"><path d="M1.5 0 H13.5 L18 4.5 V16.5 Q18 18 16.5 18 H1.5 Q0 18 0 16.5 V1.5 Q0 0 1.5 0Z" fill="#00b4e4"/><rect x="2.5" y="2.5" width="10" height="3.5" fill="#fff"/><circle cx="9" cy="12.3" r="3" fill="#fff"/></g></svg>
<div class="t" style="left:449.5px;top:309.69px;font-size:11px;color:#000;">Save State</div>
<svg class="r" style="left:539px;top:285px;" width="21" height="18" viewBox="0 0 21 18"><g transform="scale(1.0,1.0)"><path d="M5.2 9 A8 8 0 1 1 7.6 15.2" fill="none" stroke="#00b4e4" stroke-width="2"/><path d="M0.5 8.2 L9.5 8.2 L5 13.5Z" fill="#00b4e4"/><path d="M12.6 4.8 V10 L16 12.2" fill="none" stroke="#00b4e4" stroke-width="1.6"/></g></svg>
<div class="t" style="left:515px;top:309.69px;font-size:11px;color:#000;">Restore State</div>
<div class="t" style="left:466px;top:332.84px;font-size:12px;color:#000;">Name</div>
<div class="r" style="left:1062px;top:327px;width:16px;height:298px;background:#f0f0f0;"></div>
<svg class="r" style="left:1066px;top:332px;" width="8" height="7" viewBox="0 0 8 7"><path d="M0.9 5.3 L4 2 L7.1 5.3" fill="none" stroke="#606060" stroke-width="2.1"/></svg>
<svg class="r" style="left:1066px;top:613px;" width="8" height="7" viewBox="0 0 8 7"><path d="M0.9 1.7 L4 5 L7.1 1.7" fill="none" stroke="#606060" stroke-width="2.1"/></svg>
<div class="r" style="left:1062px;top:393px;width:15px;height:18px;background:#cdcdcd;"></div>
<div class="r" style="left:1061px;top:327px;width:1px;height:24px;background:#e5e5e5;"></div>
<svg class="r" style="left:489px;top:357px;" width="7" height="10" viewBox="0 0 7 10"><path d="M1 1 L5 4.8 L1 8.6" fill="none" stroke="#a8a8a8" stroke-width="1.7"/></svg>
<svg class="r" style="left:507px;top:353px;" width="14" height="16" viewBox="0 0 14 16"><defs><linearGradient id="fg" x1="0" y1="0" x2="0" y2="1"><stop offset="0" stop-color="#fdeaa6"/><stop offset="1" stop-color="#fbd970"/></linearGradient></defs><path d="M0.5 1 Q0.5 0.5 1 0.5 H11.5 V15.5 H0.5Z" fill="url(#fg)" stroke="#e9c14f"/><path d="M10 9.5 H12.5 V15.5 H10Z" fill="#fbdc78" stroke="#e9c14f"/></svg>
<svg class="r" style="left:505px;top:359px;" width="10" height="10" viewBox="0 0 10 10"><defs><linearGradient id="cg" x1="0" y1="0" x2="1" y2="1"><stop offset="0" stop-color="#5cb85c"/><stop offset="1" stop-color="#1e7a1e"/></linearGradient></defs><circle cx="5" cy="5" r="4.8" fill="url(#cg)"/><path d="M2 5.3 L4.2 7.4 L8.1 2.6" fill="none" stroke="#fff" stroke-width="1.8"/></svg>
<div class="t" style="left:527px;top:356.86px;font-size:11.5px;color:#000;">QmlEditorWidgets</div>
<svg class="r" style="left:489px;top:377px;" width="7" height="10" viewBox="0 0 7 10"><path d="M1 1 L5 4.8 L1 8.6" fill="none" stroke="#a8a8a8" stroke-width="1.7"/></svg>
<svg class="r" style="left:507px;top:373px;" width="14" height="16" viewBox="0 0 14 16"><defs><linearGradient id="fg" x1="0" y1="0" x2="0" y2="1"><stop offset="0" stop-color="#fdeaa6"/><stop offset="1" stop-color="#fbd970"/></linearGradient></defs><path d="M0.5 1 Q0.5 0.5 1 0.5 H11.5 V15.5 H0.5Z" fill="url(#fg)" stroke="#e9c14f"/><path d="M10 9.5 H12.5 V15.5 H10Z" fill="#fbdc78" stroke="#e9c14f"/></svg>
<svg class="r" style="left:505px;top:379px;" width="10" height="10" viewBox="0 0 10 10"><defs><linearGradient id="cg" x1="0" y1="0" x2="1" y2="1"><stop offset="0" stop-color="#5cb85c"/><stop offset="1" stop-color="#1e7a1e"/></linearGradient></defs><circle cx="5" cy="5" r="4.8" fill="url(#cg)"/><path d="M2 5.3 L4.2 7.4 L8.1 2.6" fill="none" stroke="#fff" stroke-width="1.8"/></svg>
<div class="t" style="left:527px;top:376.86px;font-size:11.5px;color:#000;">QmlLive</div>
<svg class="r" style="left:489px;top:397px;" width="7" height="10" viewBox="0 0 7 10"><path d="M1 1 L5 4.8 L1 8.6" fill="none" stroke="#a8a8a8" stroke-width="1.7"/></svg>
<svg class="r" style="left:507px;top:393px;" width="14" height="16" viewBox="0 0 14 16"><defs><linearGradient id="fg" x1="0" y1="0" x2="0" y2="1"><stop offset="0" stop-color="#fdeaa6"/><stop offset="1" stop-color="#fbd970"/></linearGradient></defs><path d="M0.5 1 Q0.5 0.5 1 0.5 H11.5 V15.5 H0.5Z" fill="url(#fg)" stroke="#e9c14f"/><path d="M10 9.5 H12.5 V15.5 H10Z" fill="#fbdc78" stroke="#e9c14f"/></svg>
<svg class="r" style="left:505px;top:399px;" width="10" height="10" viewBox="0 0 10 10"><defs><linearGradient id="cg" x1="0" y1="0" x2="1" y2="1"><stop offset="0" stop-color="#5cb85c"/><stop offset="1" stop-color="#1e7a1e"/></linearGradient></defs><circle cx="5" cy="5" r="4.8" fill="url(#cg)"/><path d="M2 5.3 L4.2 7.4 L8.1 2.6" fill="none" stroke="#fff" stroke-width="1.8"/></svg>
<div class="t" style="left:527px;top:396.86px;font-size:11.5px;color:#000;">qsint</div>
<div class="t" style="left:784px;top:396.86px;font-size:11.5px;color:#000;">File Folder</div>
<div class="t" style="left:884px;top:397.29px;font-size:11px;color:#000;">20.11.2019 09:22</div>
<svg class="r" style="left:489px;top:417px;" width="7" height="10" viewBox="0 0 7 10"><path d="M1 1 L5 4.8 L1 8.6" fill="none" stroke="#a8a8a8" stroke-width="1.7"/></svg>
<svg class="r" style="left:507px;top:413px;" width="14" height="16" viewBox="0 0 14 16"><defs><linearGradient id="fg" x1="0" y1="0" x2="0" y2="1"><stop offset="0" stop-color="#fdeaa6"/><stop offset="1" stop-color="#fbd970"/></linearGradient></defs><path d="M0.5 1 Q0.5 0.5 1 0.5 H11.5 V15.5 H0.5Z" fill="url(#fg)" stroke="#e9c14f"/><path d="M10 9.5 H12.5 V15.5 H10Z" fill="#fbdc78" stroke="#e9c14f"/></svg>
<svg class="r" style="left:505px;top:419px;" width="10" height="10" viewBox="0 0 10 10"><defs><linearGradient id="cg" x1="0" y1="0" x2="1" y2="1"><stop offset="0" stop-color="#5cb85c"/><stop offset="1" stop-color="#1e7a1e"/></linearGradient></defs><circle cx="5" cy="5" r="4.8" fill="url(#cg)"/><path d="M2 5.3 L4.2 7.4 L8.1 2.6" fill="none" stroke="#fff" stroke-width="1.8"/></svg>
<div class="t" style="left:527px;top:416.86px;font-size:11.5px;color:#000;">qsint-old</div>
<div class="t" style="left:784px;top:416.86px;font-size:11.5px;color:#000;">File Folder</div>
<div class="t" style="left:884px;top:417.29px;font-size:11px;color:#000;">20.11.2019 09:22</div>
<svg class="r" style="left:487px;top:437px;" width="10" height="6" viewBox="0 0 10 6"><path d="M1 1 L5 5 L9 1" fill="none" stroke="#404040" stroke-width="1.6"/></svg>
<svg class="r" style="left:507px;top:433px;" width="14" height="16" viewBox="0 0 14 16"><defs><linearGradient id="fg" x1="0" y1="0" x2="0" y2="1"><stop offset="0" stop-color="#fdeaa6"/><stop offset="1" stop-color="#fbd970"/></linearGradient></defs><path d="M0.5 1 Q0.5 0.5 1 0.5 H11.5 V15.5 H0.5Z" fill="url(#fg)" stroke="#e9c14f"/><path d="M10 9.5 H12.5 V15.5 H10Z" fill="#fbdc78" stroke="#e9c14f"/></svg>
<div class="t" style="left:527px;top:436.86px;font-size:11.5px;color:#000;">Qt</div>
<div class="t" style="left:784px;top:436.86px;font-size:11.5px;color:#000;">File Folder</div>
<div class="t" style="left:884px;top:437.29px;font-size:11px;color:#000;">15.11.2019 12:42</div>
<svg class="r" style="left:507px;top:457px;" width="10" height="6" viewBox="0 0 10 6"><path d="M1 1 L5 5 L9 1" fill="none" stroke="#404040" stroke-width="1.6"/></svg>
<svg class="r" style="left:527px;top:453px;" width="14" height="16" viewBox="0 0 14 16"><defs><linearGradient id="fg" x1="0" y1="0" x2="0" y2="1"><stop offset="0" stop-color="#fdeaa6"/><stop offset="1" stop-color="#fbd970"/></linearGradient></defs><path d="M0.5 1 Q0.5 0.5 1 0.5 H11.5 V15.5 H0.5Z" fill="url(#fg)" stroke="#e9c14f"/><path d="M10 9.5 H12.5 V15.5 H10Z" fill="#fbdc78" stroke="#e9c14f"/></svg>
<div class="t" style="left:547px;top:456.86px;font-size:11.5px;color:#000;">5.12.2</div>
<div class="t" style="left:784px;top:456.86px;font-size:11.5px;color:#000;">File Folder</div>
<div class="t" style="left:884px;top:457.29px;font-size:11px;color:#000;">15.07.2019 13:41</div>
<svg class="r" style="left:527px;top:477px;" width="10" height="6" viewBox="0 0 10 6"><path d="M1 1 L5 5 L9 1" fill="none" stroke="#404040" stroke-width="1.6"/></svg>
<svg class="r" style="left:547px;top:473px;" width="14" height="16" viewBox="0 0 14 16"><defs><linearGradient id="fg" x1="0" y1="0" x2="0" y2="1"><stop offset="0" stop-color="#fdeaa6"/><stop offset="1" stop-color="#fbd970"/></linearGradient></defs><path d="M0.5 1 Q0.5 0.5 1 0.5 H11.5 V15.5 H0.5Z" fill="url(#fg)" stroke="#e9c14f"/><path d="M10 9.5 H12.5 V15.5 H10Z" fill="#fbdc78" stroke="#e9c14f"/></svg>
<div class="t" style="left:567px;top:476.86px;font-size:11.5px;color:#000;">mingw73_32</div>
<div class="t" style="left:784px;top:476.86px;font-size:11.5px;color:#000;">File Folder</div>
<div class="t" style="left:884px;top:477.29px;font-size:11px;color:#000;">18.03.2019 12:47</div>
<svg class="r" style="left:547px;top:497px;" width="10" height="6" viewBox="0 0 10 6"><path d="M1 1 L5 5 L9 1" fill="none" stroke="#404040" stroke-width="1.6"/></svg>
<svg class="r" style="left:567px;top:493px;" width="14" height="16" viewBox="0 0 14 16"><defs><linearGradient id="fg" x1="0" y1="0" x2="0" y2="1"><stop offset="0" stop-color="#fdeaa6"/><stop offset="1" stop-color="#fbd970"/></linearGradient></defs><path d="M0.5 1 Q0.5 0.5 1 0.5 H11.5 V15.5 H0.5Z" fill="url(#fg)" stroke="#e9c14f"/><path d="M10 9.5 H12.5 V15.5 H10Z" fill="#fbdc78" stroke="#e9c14f"/></svg>
<div class="t" style="left:587px;top:496.86px;font-size:11.5px;color:#000;">bin</div>
<div class="t" style="left:784px;top:496.86px;font-size:11.5px;color:#000;">File Folder</div>
<div class="t" style="left:884px;top:497.29px;font-size:11px;color:#000;">18.03.2019 12:51</div>
<svg class="r" style="left:587px;top:514px;" width="15" height="14" viewBox="0 0 15 14"><rect x="0" y="0" width="14" height="11" rx="2" fill="#41cd52"/><text x="2" y="8.5" font-size="8" fill="#fff" font-family="Liberation Sans" font-weight="bold">Qt</text><text x="9" y="14" font-size="10" fill="#1a3a8a" font-family="Liberation Sans" font-weight="bold">?</text></svg>
<div class="t" style="left:607px;top:516.86px;font-size:11.5px;color:#000;">assistant.exe</div>
<div class="t" style="left:677px;width:100px;text-align:right;top:517.29px;font-size:11px;">1,26 MiB</div>
<div class="t" style="left:784px;top:516.86px;font-size:11.5px;color:#000;">exe File</div>
<div class="t" style="left:884px;top:517.29px;font-size:11px;color:#000;">07.03.2019 20:23</div>
<svg class="r" style="left:587px;top:535px;" width="15" height="12" viewBox="0 0 15 12"><rect x="0.5" y="0.5" width="14" height="11" fill="#fff" stroke="#6a7a8a"/><rect x="0.5" y="0.5" width="14" height="2" fill="#6a7a8a"/><rect x="3" y="4" width="4" height="6" fill="#1a6ad8"/><path d="M8.5 4.5 H12 M8.5 6.5 H12 M8.5 8.5 H12" stroke="#6a7a8a" stroke-width="1"/></svg>
<div class="t" style="left:607px;top:536.86px;font-size:11.5px;color:#000;">canbusutil....</div>
<div class="t" style="left:677px;width:100px;text-align:right;top:537.29px;font-size:11px;">44,00 KiB</div>
<div class="t" style="left:784px;top:536.86px;font-size:11.5px;color:#000;">exe File</div>
<div class="t" style="left:884px;top:537.29px;font-size:11px;color:#000;">07.03.2019 19:48</div>
<svg class="r" style="left:588px;top:553px;" width="13" height="16" viewBox="0 0 13 16"><path d="M0.5 0.5 H9 L12.5 4 V15.5 H0.5Z" fill="#fff" stroke="#8a8a8a"/><circle cx="5.5" cy="8.5" r="2.8" fill="none" stroke="#9aa" stroke-width="1"/><circle cx="8" cy="11" r="1.8" fill="none" stroke="#7ab" stroke-width="1"/></svg>
<div class="t" style="left:607px;top:556.86px;font-size:11.5px;color:#000;">d3dcompil...</div>
<div class="t" style="left:677px;width:100px;text-align:right;top:557.29px;font-size:11px;">3,31 MiB</div>
<div class="t" style="left:784px;top:556.86px;font-size:11.5px;color:#000;">dll File</div>
<div class="t" style="left:884px;top:557.29px;font-size:11px;color:#000;">11.03.2014 11:54</div>
<svg class="r" style="left:587px;top:574px;" width="15" height="14" viewBox="0 0 15 14"><rect x="0" y="0" width="14" height="11" rx="2" fill="#41cd52"/><text x="2" y="8.5" font-size="8" fill="#fff" font-family="Liberation Sans" font-weight="bold">Qt</text><rect x="1" y="11" width="12" height="2" fill="#f0c000"/></svg>
<div class="t" style="left:607px;top:576.86px;font-size:11.5px;color:#000;">designer.exe</div>
<div class="t" style="left:677px;width:100px;text-align:right;top:577.29px;font-size:11px;">543,00 KiB</div>
<div class="t" style="left:784px;top:576.86px;font-size:11.5px;color:#000;">exe File</div>
<div class="t" style="left:884px;top:577.29px;font-size:11px;color:#000;">07.03.2019 20:28</div>
<svg class="r" style="left:587px;top:595px;" width="15" height="12" viewBox="0 0 15 12"><rect x="0.5" y="0.5" width="14" height="11" fill="#fff" stroke="#6a7a8a"/><rect x="0.5" y="0.5" width="14" height="2" fill="#6a7a8a"/><rect x="3" y="4" width="4" height="6" fill="#1a6ad8"/><path d="M8.5 4.5 H12 M8.5 6.5 H12 M8.5 8.5 H12" stroke="#6a7a8a" stroke-width="1"/></svg>
<div class="t" style="left:607px;top:596.86px;font-size:11.5px;color:#000;">dumpcpp.e...</div>
<div class="t" style="left:677px;width:100px;text-align:right;top:597.29px;font-size:11px;">346,50 KiB</div>
<div class="t" style="left:784px;top:596.86px;font-size:11.5px;color:#000;">exe File</div>
<div class="t" style="left:884px;top:597.29px;font-size:11px;color:#000;">07.03.2019 19:45</div>
<svg class="r" style="left:587px;top:615px;" width="15" height="12" viewBox="0 0 15 12"><rect x="0.5" y="0.5" width="14" height="11" fill="#fff" stroke="#6a7a8a"/><rect x="0.5" y="0.5" width="14" height="2" fill="#6a7a8a"/><rect x="3" y="4" width="4" height="6" fill="#1a6ad8"/><path d="M8.5 4.5 H12 M8.5 6.5 H12 M8.5 8.5 H12" stroke="#6a7a8a" stroke-width="1"/></svg>
<div class="t" style="left:607px;top:616.86px;font-size:11.5px;color:#000;">dumpdoc.e...</div>
<div class="t" style="left:677px;width:100px;text-align:right;top:617.29px;font-size:11px;">250,50 KiB</div>
<div class="t" style="left:784px;top:616.86px;font-size:11.5px;color:#000;">exe File</div>
<div class="t" style="left:884px;top:617.29px;font-size:11px;color:#000;">07.03.2019 19:45</div>
<div class="r" style="left:441px;top:625px;width:639px;height:1px;background:#1aa3e8;"></div>
<div class="r" style="left:615px;top:284px;width:406px;height:138px;background:transparent;box-shadow:1px 3px 16px rgba(0,0,0,0.32);"></div>
<div class="r" style="left:615px;top:284px;width:406px;height:138px;background:#707070;"></div>
<div class="r" style="left:616px;top:285px;width:404px;height:136px;background:#ffffff;"></div>
<svg class="r" style="left:624px;top:292px;" width="15" height="13" viewBox="0 0 15 13"><defs><linearGradient id="wg" x1="0" y1="0" x2="0" y2="1"><stop offset="0" stop-color="#5a8fc8"/><stop offset="1" stop-color="#3f9a4f"/></linearGradient><linearGradient id="wg2" x1="0" y1="0" x2="0" y2="1"><stop offset="0" stop-color="#7ab6e0"/><stop offset="1" stop-color="#9ad08a"/></linearGradient></defs><rect x="0.5" y="0.5" width="14" height="12" fill="#ececec" stroke="#9a9a9a"/><rect x="2" y="2" width="5" height="9" fill="url(#wg)"/><rect x="8" y="2" width="2" height="9" fill="#d6d6d6"/><rect x="11" y="2" width="2" height="5" fill="url(#wg2)"/></svg>
<div class="t" style="left:645px;top:294.52px;font-size:11.2px;color:#000;">Label 3</div>
<div class="r" style="left:616px;top:315px;width:404px;height:1px;background:#8a8a8a;"></div>
<div class="r" style="left:901px;top:299px;width:10px;height:1px;background:#c8c8c8;"></div>
<div class="r" style="left:946px;top:294px;width:10px;height:10px;background:transparent;border:1px solid #111;box-sizing:border-box;"></div>
<svg class="r" style="left:992px;top:294px;" width="10" height="10" viewBox="0 0 10 10"><path d="M0.5 0.5 L9.5 9.5 M9.5 0.5 L0.5 9.5" stroke="#111" stroke-width="1.1"/></svg>
<div class="r" style="left:616px;top:316px;width:386px;height:104px;background:#f0f0f0;"></div>
<div class="clip" style="left:616px;top:316px;width:386px;height:104px;">
<div class="t" style="left:1px;top:3.86px;font-size:10.8px;color:#000;letter-spacing:-0.013px;">Label 3 18:51:02:362 - Lorem ipsum dolor sit amet, consectetuer adipiscing elit.</div>
<div class="t" style="left:1px;top:16.86px;font-size:10.8px;color:#000;letter-spacing:-0.076px;">Aenean commodo ligula eget dolor. Aenean massa. Cum sociis natoque</div>
<div class="t" style="left:1px;top:29.86px;font-size:10.8px;color:#000;letter-spacing:-0.034px;">penatibus et magnis dis parturient montes, nascetur ridiculus mus. Donec quam</div>
<div class="t" style="left:1px;top:42.86px;font-size:10.8px;color:#000;letter-spacing:-0.03px;">felis, ultricies nec, pellentesque eu, pretium quis, sem. Nulla consequat massa</div>
<div class="t" style="left:1px;top:55.86px;font-size:10.8px;color:#000;letter-spacing:0.085px;">quis enim. Donec pede justo, fringilla vel, aliquet nec, vulputate eget, arcu. In</div>
<div class="t" style="left:1px;top:68.86px;font-size:10.8px;color:#000;letter-spacing:0.05px;">enim justo, rhoncus ut, imperdiet a, venenatis vitae, justo. Nullam dictum felis</div>
<div class="t" style="left:1px;top:81.86px;font-size:10.8px;color:#000;letter-spacing:-0.038px;">eu pede mollis pretium. Integer tincidunt. Cras dapibus. Vivamus elementum</div>
<div class="t" style="left:1px;top:94.86px;font-size:10.8px;color:#000;letter-spacing:0.059px;">semper nisi. Aenean vulputate eleifend tellus. Aenean leo ligula, porttitor eu,</div>
</div>
<div class="r" style="left:1003px;top:318px;width:16px;height:102px;background:#f0f0f0;"></div>
<svg class="r" style="left:1007px;top:323px;" width="8" height="7" viewBox="0 0 8 7"><path d="M0.9 5.3 L4 2 L7.1 5.3" fill="none" stroke="#606060" stroke-width="2.1"/></svg>
<svg class="r" style="left:1007px;top:408px;" width="8" height="7" viewBox="0 0 8 7"><path d="M0.9 1.7 L4 5 L7.1 1.7" fill="none" stroke="#606060" stroke-width="2.1"/></svg>
<div class="r" style="left:1003px;top:335px;width:15px;height:53px;background:#cdcdcd;"></div>
<div class="r" style="left:1002px;top:316px;width:1px;height:104px;background:#ffffff;"></div>
<div class="r" style="left:441px;top:273px;width:638px;height:117px;background:rgba(24,147,255,0.25);border:1px solid #0064b3;box-sizing:border-box;"></div>
<div class="r" style="left:445px;top:430px;width:39px;height:39px;background:rgba(0,0,0,0.25);"></div>
<div class="r" style="left:450px;top:435px;width:15px;height:29px;background:#c2dcf5;border:1px solid #0078d7;border-top:4px solid #0078d7;box-sizing:border-box;"></div>
<svg class="r" style="left:468px;top:443px;" width="7" height="13" viewBox="0 0 7 13"><path d="M6.5 0 V13 L0 6.5Z" fill="#fff"/></svg>
<div class="r" style="left:740px;top:430px;width:39px;height:39px;background:rgba(0,0,0,0.25);"></div>
<div class="r" style="left:745px;top:435px;width:29px;height:29px;background:#ffffff;border:1px solid #0078d7;border-top:4px solid #0078d7;box-sizing:border-box;"></div>
<div class="r" style="left:1036px;top:430px;width:39px;height:39px;background:rgba(0,0,0,0.25);"></div>
<div class="r" style="left:1055px;top:435px;width:15px;height:29px;background:#c2dcf5;border:1px solid #0078d7;border-top:4px solid #0078d7;box-sizing:border-box;"></div>
<svg class="r" style="left:1045px;top:443px;" width="7" height="13" viewBox="0 0 7 13"><path d="M0.5 0 V13 L7 6.5Z" fill="#fff"/></svg>
<div class="r" style="left:740px;top:277px;width:39px;height:39px;background:rgba(0,0,0,0.25);"></div>
<div class="r" style="left:745px;top:282px;width:29px;height:15px;background:#c2dcf5;border:1px solid #0078d7;border-top:4px solid #0078d7;box-sizing:border-box;"></div>
<svg class="r" style="left:753px;top:299px;" width="13" height="7" viewBox="0 0 13 7"><path d="M0 6.5 H13 L6.5 0Z" fill="#fff"/></svg>
<div class="r" style="left:740px;top:583px;width:39px;height:39px;background:rgba(0,0,0,0.25);"></div>
<div class="r" style="left:745px;top:602px;width:29px;height:15px;background:#c2dcf5;border:1px solid #0078d7;border-top:4px solid #0078d7;box-sizing:border-box;"></div>
<svg class="r" style="left:753px;top:592px;" width="13" height="7" viewBox="0 0 13 7"><path d="M0 0.5 H13 L6.5 7Z" fill="#fff"/></svg>
<svg class="r" style="left:791px;top:336px;opacity:0.35" width="19" height="29" viewBox="-0.8 -0.8 15 23"><g transform="scale(1)"><path d="M0.5 0.5 V17 L4 13.5 L7 20 L9.3 19 L6.5 12.6 H11.6Z" fill="#eeeeee" stroke="#666" stroke-width="1.1" stroke-linejoin="miter"/></g></svg>
<svg class="r" style="left:784px;top:328px;opacity:0.45" width="19" height="29" viewBox="-0.8 -0.8 15 23"><g transform="scale(1)"><path d="M0.5 0.5 V17 L4 13.5 L7 20 L9.3 19 L6.5 12.6 H11.6Z" fill="#eeeeee" stroke="#666" stroke-width="1.1" stroke-linejoin="miter"/></g></svg>
<svg class="r" style="left:778px;top:320px;opacity:0.55" width="19" height="29" viewBox="-0.8 -0.8 15 23"><g transform="scale(1)"><path d="M0.5 0.5 V17 L4 13.5 L7 20 L9.3 19 L6.5 12.6 H11.6Z" fill="#eeeeee" stroke="#666" stroke-width="1.1" stroke-linejoin="miter"/></g></svg>
<svg class="r" style="left:772px;top:312px;opacity:0.65" width="19" height="29" viewBox="-0.8 -0.8 15 23"><g transform="scale(1)"><path d="M0.5 0.5 V17 L4 13.5 L7 20 L9.3 19 L6.5 12.6 H11.6Z" fill="#eeeeee" stroke="#666" stroke-width="1.1" stroke-linejoin="miter"/></g></svg>
<svg class="r" style="left:765px;top:304px;opacity:0.8" width="19" height="29" viewBox="-0.8 -0.8 15 23"><g transform="scale(1)"><path d="M0.5 0.5 V17 L4 13.5 L7 20 L9.3 19 L6.5 12.6 H11.6Z" fill="#eeeeee" stroke="#666" stroke-width="1.1" stroke-linejoin="miter"/></g></svg>
<svg class="r" style="left:759px;top:296px;opacity:1.0" width="19" height="29" viewBox="-0.8 -0.8 15 23"><g transform="scale(1)"><path d="M0.5 0.5 V17 L4 13.5 L7 20 L9.3 19 L6.5 12.6 H11.6Z" fill="#fff" stroke="#000" stroke-width="1.1" stroke-linejoin="miter"/></g></svg>
</body></html>
